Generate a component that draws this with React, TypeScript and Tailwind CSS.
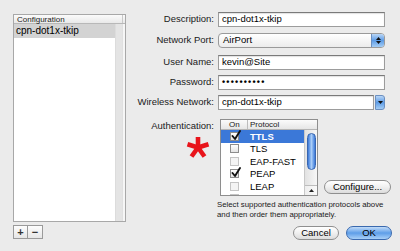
import React from "react";

const Check = ({ on, dim }: { on?: boolean; dim?: boolean }) => (
  <div
    className={`relative w-[9px] h-[9px] border ${dim ? "border-[#c4c4c4] bg-[#f4f4f4]" : "border-[#8d8d8d] bg-gradient-to-b from-[#ffffff] to-[#e4e4e4]"}`}
  >
    {on && (
      <svg className="absolute left-[0px] top-[-3px]" width="10" height="11" viewBox="0 0 10 11">
        <path d="M1.5 6 L4 9 L9 1" stroke="#111" strokeWidth="1.9" fill="none" strokeLinecap="round" strokeLinejoin="round" />
      </svg>
    )}
  </div>
);

const Field = ({ children }: { children?: React.ReactNode }) => (
  <div className="w-[167px] h-[15px] bg-white border border-[#9c9c9c] border-t-[#7a7a7a] shadow-[inset_0_1px_1px_rgba(0,0,0,0.12)] flex items-center pl-[3px] text-[9.5px] text-black">
    {children}
  </div>
);

const Row = ({ label, mt, children }: { label: string; mt: string; children: React.ReactNode }) => (
  <div className={`flex items-center ${mt}`}>
    <div className="w-[86px] text-right text-[9.5px] text-[#1a1a1a] pr-[1px] whitespace-nowrap">{label}</div>
    <div className="ml-[3px]">{children}</div>
  </div>
);

const protocols = [
  { name: "TTLS", on: true, sel: true },
  { name: "TLS", on: false },
  { name: "EAP-FAST", on: false, dim: true },
  { name: "PEAP", on: true },
  { name: "LEAP", on: false, dim: true },
  { name: "", on: false, dim: true },
];

export default function App() {
  return (
    <div className="w-[400px] h-[251px] bg-[#ebebeb] flex font-['Liberation_Sans',Arial,sans-serif] relative overflow-hidden">
      {/* Left column */}
      <div className="w-[129px] shrink-0 pl-[13px] pt-[14px] flex flex-col">
        <div className="w-[113px] h-[208px] border border-[#a8a8a8] bg-white flex flex-col">
          <div className="h-[9px] bg-gradient-to-b from-[#fbfbfb] to-[#e9e9e9] border-b border-[#b8b8b8] flex">
            <div className="flex-1 text-[8px] leading-[9px] pl-[3px] text-[#222]">Configuration</div>
            <div className="w-[3px] border-l border-[#c9c9c9]"></div>
          </div>
          <div className="flex-1 flex">
            <div className="flex-1 flex flex-col">
              <div className="h-[14px] bg-[#d3d3d3] text-[10px] leading-[14px] pl-[2px] text-black">cpn-dot1x-tkip</div>
            </div>
            <div className="w-[10px] flex border-l border-[#dcdcdc]">
              <div className="w-[6px] bg-[#e4e4e4]"></div>
              <div className="flex-1 bg-[#f6f6f6] border-l border-[#e0e0e0]"></div>
            </div>
          </div>
        </div>
        <div className="flex mt-[3px]">
          <div className="w-[15px] h-[14px] border border-[#9a9a9a] bg-gradient-to-b from-[#fdfdfd] to-[#e6e6e6] flex items-center justify-center text-[11px] leading-none font-bold text-[#333]">+</div>
          <div className="w-[15px] h-[14px] border border-l-0 border-[#9a9a9a] bg-gradient-to-b from-[#fdfdfd] to-[#e6e6e6] flex items-center justify-center text-[11px] leading-none font-bold text-[#333]">−</div>
        </div>
      </div>

      {/* Right column */}
      <div className="flex-1 flex flex-col pt-[12px]">
        <Row label="Description:" mt="mt-[0px]">
          <Field>cpn-dot1x-tkip</Field>
        </Row>
        <Row label="Network Port:" mt="mt-[6px]">
          <div className="w-[167px] h-[15px] rounded-[4px] border border-[#9a9a9a] bg-gradient-to-b from-[#ffffff] to-[#ececec] flex items-center overflow-hidden">
            <div className="flex-1 pl-[4px] text-[9.5px] text-black">AirPort</div>
            <div className="w-[13px] h-full bg-gradient-to-b from-[#b9d6f6] via-[#5d9ce6] to-[#a5cdf5] border-l border-[#6b8fc0] flex flex-col items-center justify-center gap-[1px]">
              <svg width="5" height="3" viewBox="0 0 5 3"><path d="M0 3 L2.5 0 L5 3Z" fill="#111" /></svg>
              <svg width="5" height="3" viewBox="0 0 5 3"><path d="M0 0 L2.5 3 L5 0Z" fill="#111" /></svg>
            </div>
          </div>
        </Row>
        <Row label="User Name:" mt="mt-[7px]">
          <Field>kevin@Site</Field>
        </Row>
        <Row label="Password:" mt="mt-[5px]">
          <Field>
            <span className="text-[9px] tracking-[1.2px] font-bold">••••••••••</span>
          </Field>
        </Row>
        <Row label="Wireless Network:" mt="mt-[5px]">
          <div className="w-[167px] h-[15px] flex">
            <div className="flex-1 bg-white border border-[#9c9c9c] border-t-[#7a7a7a] shadow-[inset_0_1px_1px_rgba(0,0,0,0.12)] flex items-center pl-[3px] text-[9.5px] text-black">cpn-dot1x-tkip</div>
            <div className="w-[10px] ml-[1px] rounded-r-[3px] bg-gradient-to-b from-[#b9d6f6] via-[#5d9ce6] to-[#a5cdf5] border border-[#6b8fc0] flex items-center justify-center">
              <svg width="5" height="3" viewBox="0 0 5 3"><path d="M0 0 L2.5 3 L5 0Z" fill="#111" /></svg>
            </div>
          </div>
        </Row>

        {/* Authentication */}
        <div className="flex mt-[9px]">
          <div className="w-[86px] text-right text-[9.5px] text-[#1a1a1a] pr-[1px] whitespace-nowrap">Authentication:</div>
          <div className="ml-[5px] flex items-end">
            <div className="w-[98px] h-[77px] border border-[#8e8e8e] bg-white flex flex-col overflow-hidden">
              <div className="h-[10px] bg-gradient-to-b from-[#fbfbfb] to-[#e6e6e6] border-b border-[#b5b5b5] flex text-[8px] leading-[9px] text-[#222]">
                <div className="w-[27px] pl-[8px] border-r border-[#bcbcbc]">On</div>
                <div className="flex-1 pl-[2px]">Protocol</div>
              </div>
              <div className="flex-1 flex">
                <div className="flex-1 flex flex-col">
                  {protocols.map((p, i) => (
                    <div
                      key={i}
                      className={`h-[12.5px] shrink-0 flex items-center ${p.sel ? "bg-[#3b78d8] text-white font-bold" : "text-black"}`}
                    >
                      <div className="w-[27px] pl-[9px] flex items-center">
                        <Check on={p.on} dim={p.dim} />
                      </div>
                      <div className="pl-[2px] text-[9.5px] leading-none">{p.name}</div>
                    </div>
                  ))}
                </div>
                <div className="w-[13px] bg-gradient-to-r from-[#e2e2e2] to-[#f7f7f7] border-l border-[#c8c8c8] flex flex-col items-center">
                  <div className="mt-[3px] w-[9px] h-[37px] rounded-full bg-gradient-to-r from-[#3b78d8] via-[#a9cdf7] to-[#3b78d8] border border-[#3866b0]"></div>
                  <div className="flex-1"></div>
                  <div className="w-full h-[10px] border-t border-[#bdbdbd] flex items-center justify-center bg-gradient-to-r from-[#eeeeee] to-[#fafafa]">
                    <svg width="5" height="3" viewBox="0 0 5 3"><path d="M0 3 L2.5 0 L5 3Z" fill="#222" /></svg>
                  </div>
                  <div className="w-full h-[10px] border-t border-[#bdbdbd] flex items-center justify-center bg-gradient-to-r from-[#eeeeee] to-[#fafafa]">
                    <svg width="5" height="3" viewBox="0 0 5 3"><path d="M0 0 L2.5 3 L5 0Z" fill="#222" /></svg>
                  </div>
                </div>
              </div>
            </div>
            <div className="ml-[6px] mb-[2px] w-[67px] h-[14px] rounded-full border border-[#8f8f8f] bg-gradient-to-b from-[#ffffff] via-[#f0f0f0] to-[#dcdcdc] flex items-center justify-center text-[9.5px] text-black">
              Configure...
            </div>
          </div>
        </div>

        <div className="ml-[88px] mt-[4px] text-[7.8px] leading-[9.5px] text-[#1a1a1a] whitespace-nowrap">
          <div>Select supported authentication protocols above</div>
          <div>and then order them appropriately.</div>
        </div>

        <div className="flex justify-end mt-[7px] pr-[8px] gap-[7px]">
          <div className="w-[46px] h-[14px] rounded-full border border-[#8f8f8f] bg-gradient-to-b from-[#ffffff] via-[#f0f0f0] to-[#dcdcdc] flex items-center justify-center text-[9.5px] text-black">Cancel</div>
          <div className="w-[46px] h-[14px] rounded-full border border-[#3a69ae] bg-gradient-to-b from-[#c2dcf8] via-[#5e9ee8] to-[#a9d0f7] flex items-center justify-center text-[9.5px] text-black">OK</div>
        </div>
      </div>

      {/* Red annotation asterisk */}
      <svg className="absolute left-[186px] top-[136px]" width="24" height="22" viewBox="0 0 24 22">
        <g stroke="#e8141b" strokeWidth="4.6" strokeLinecap="butt">
          <line x1="12" y1="11.5" x2="12" y2="1" />
          <line x1="12" y1="11.5" x2="1.5" y2="8.2" />
          <line x1="12" y1="11.5" x2="22.5" y2="8.2" />
          <line x1="12" y1="11.5" x2="5.5" y2="20.5" />
          <line x1="12" y1="11.5" x2="18.5" y2="20.5" />
        </g>
      </svg>
    </div>
  );
}
